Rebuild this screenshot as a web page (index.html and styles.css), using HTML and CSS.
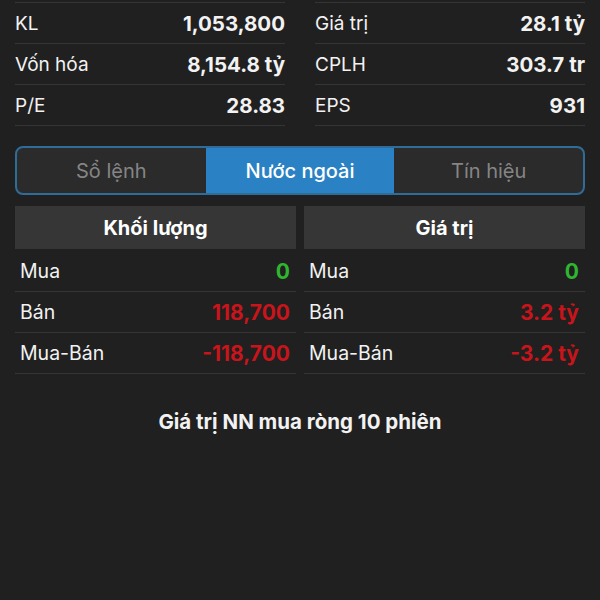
FILE: index.html
```html
<!DOCTYPE html>
<html lang="vi">
<head>
  <meta charset="UTF-8" />
  <meta name="viewport" content="width=device-width, initial-scale=1.0"/>
  <title>Nước ngoài</title>
  <link rel="stylesheet" href="styles.css">
</head>
<body>
  <div class="stats">
    <div class="col">
      <div class="row"><span>KL</span><b>1,053,800</b></div>
      <div class="row"><span>Vốn hóa</span><b>8,154.8 tỷ</b></div>
      <div class="row"><span>P/E</span><b>28.83</b></div>
    </div>
    <div class="col">
      <div class="row"><span>Giá trị</span><b>28.1 tỷ</b></div>
      <div class="row"><span>CPLH</span><b>303.7 tr</b></div>
      <div class="row"><span>EPS</span><b>931</b></div>
    </div>
  </div>

  <div class="tabs">
    <div class="tab">Sổ lệnh</div>
    <div class="tab active">Nước ngoài</div>
    <div class="tab">Tín hiệu</div>
  </div>

  <div class="tables">
    <div class="table">
      <div class="head">Khối lượng</div>
      <div class="trow"><span>Mua</span><b class="up">0</b></div>
      <div class="trow"><span>Bán</span><b class="down">118,700</b></div>
      <div class="trow"><span>Mua-Bán</span><b class="down">-118,700</b></div>
    </div>
    <div class="table">
      <div class="head">Giá trị</div>
      <div class="trow"><span>Mua</span><b class="up">0</b></div>
      <div class="trow"><span>Bán</span><b class="down">3.2 tỷ</b></div>
      <div class="trow"><span>Mua-Bán</span><b class="down">-3.2 tỷ</b></div>
    </div>
  </div>

  <h2 class="title">Giá trị NN mua ròng 10 phiên</h2>
</body>
</html>
```

FILE: styles.css
```css
body { margin: 0; background: #202020; color: #f2f2f2; font-family: Inter, "Noto Sans", sans-serif; }
b { font-weight: 700; }

.stats { display: grid; grid-template-columns: 1fr 1fr; gap: 30px; padding: 2px 15px 0; }
.col { border-top: 1px solid #353535; }
.row { display: flex; justify-content: space-between; align-items: center; height: 40px; border-bottom: 1px solid #353535; font-size: 19px; }
.row b { font-size: 20.5px; }

.tabs { display: flex; margin: 20px 15px 0; height: 45px; border: 2px solid #2f6c98; border-radius: 8px; overflow: hidden; background: #2b2b2b; }
.tab { flex: 1; display: flex; align-items: center; justify-content: center; font-size: 20px; color: #858585; }
.tab.active { background: #2a82c4; color: #fff; font-weight: 500; }

.tables { display: grid; grid-template-columns: 1fr 1fr; gap: 8px; margin: 11px 15px 0; }
.head { height: 43px; margin-bottom: 2px; background: #363636; display: flex; align-items: center; justify-content: center; font-size: 20px; font-weight: 700; color: #fff; }
.trow { display: flex; justify-content: space-between; align-items: center; height: 40px; padding: 0 6px 0 5px; border-bottom: 1px solid #353535; font-size: 19.5px; }
.trow b { font-size: 21px; }
.up { color: #2fb52f; }
.down { color: #c8141b; }

.title { margin: 35px 0 0; text-align: center; font-size: 20.5px; font-weight: 700; color: #f2f2f2; }
```
